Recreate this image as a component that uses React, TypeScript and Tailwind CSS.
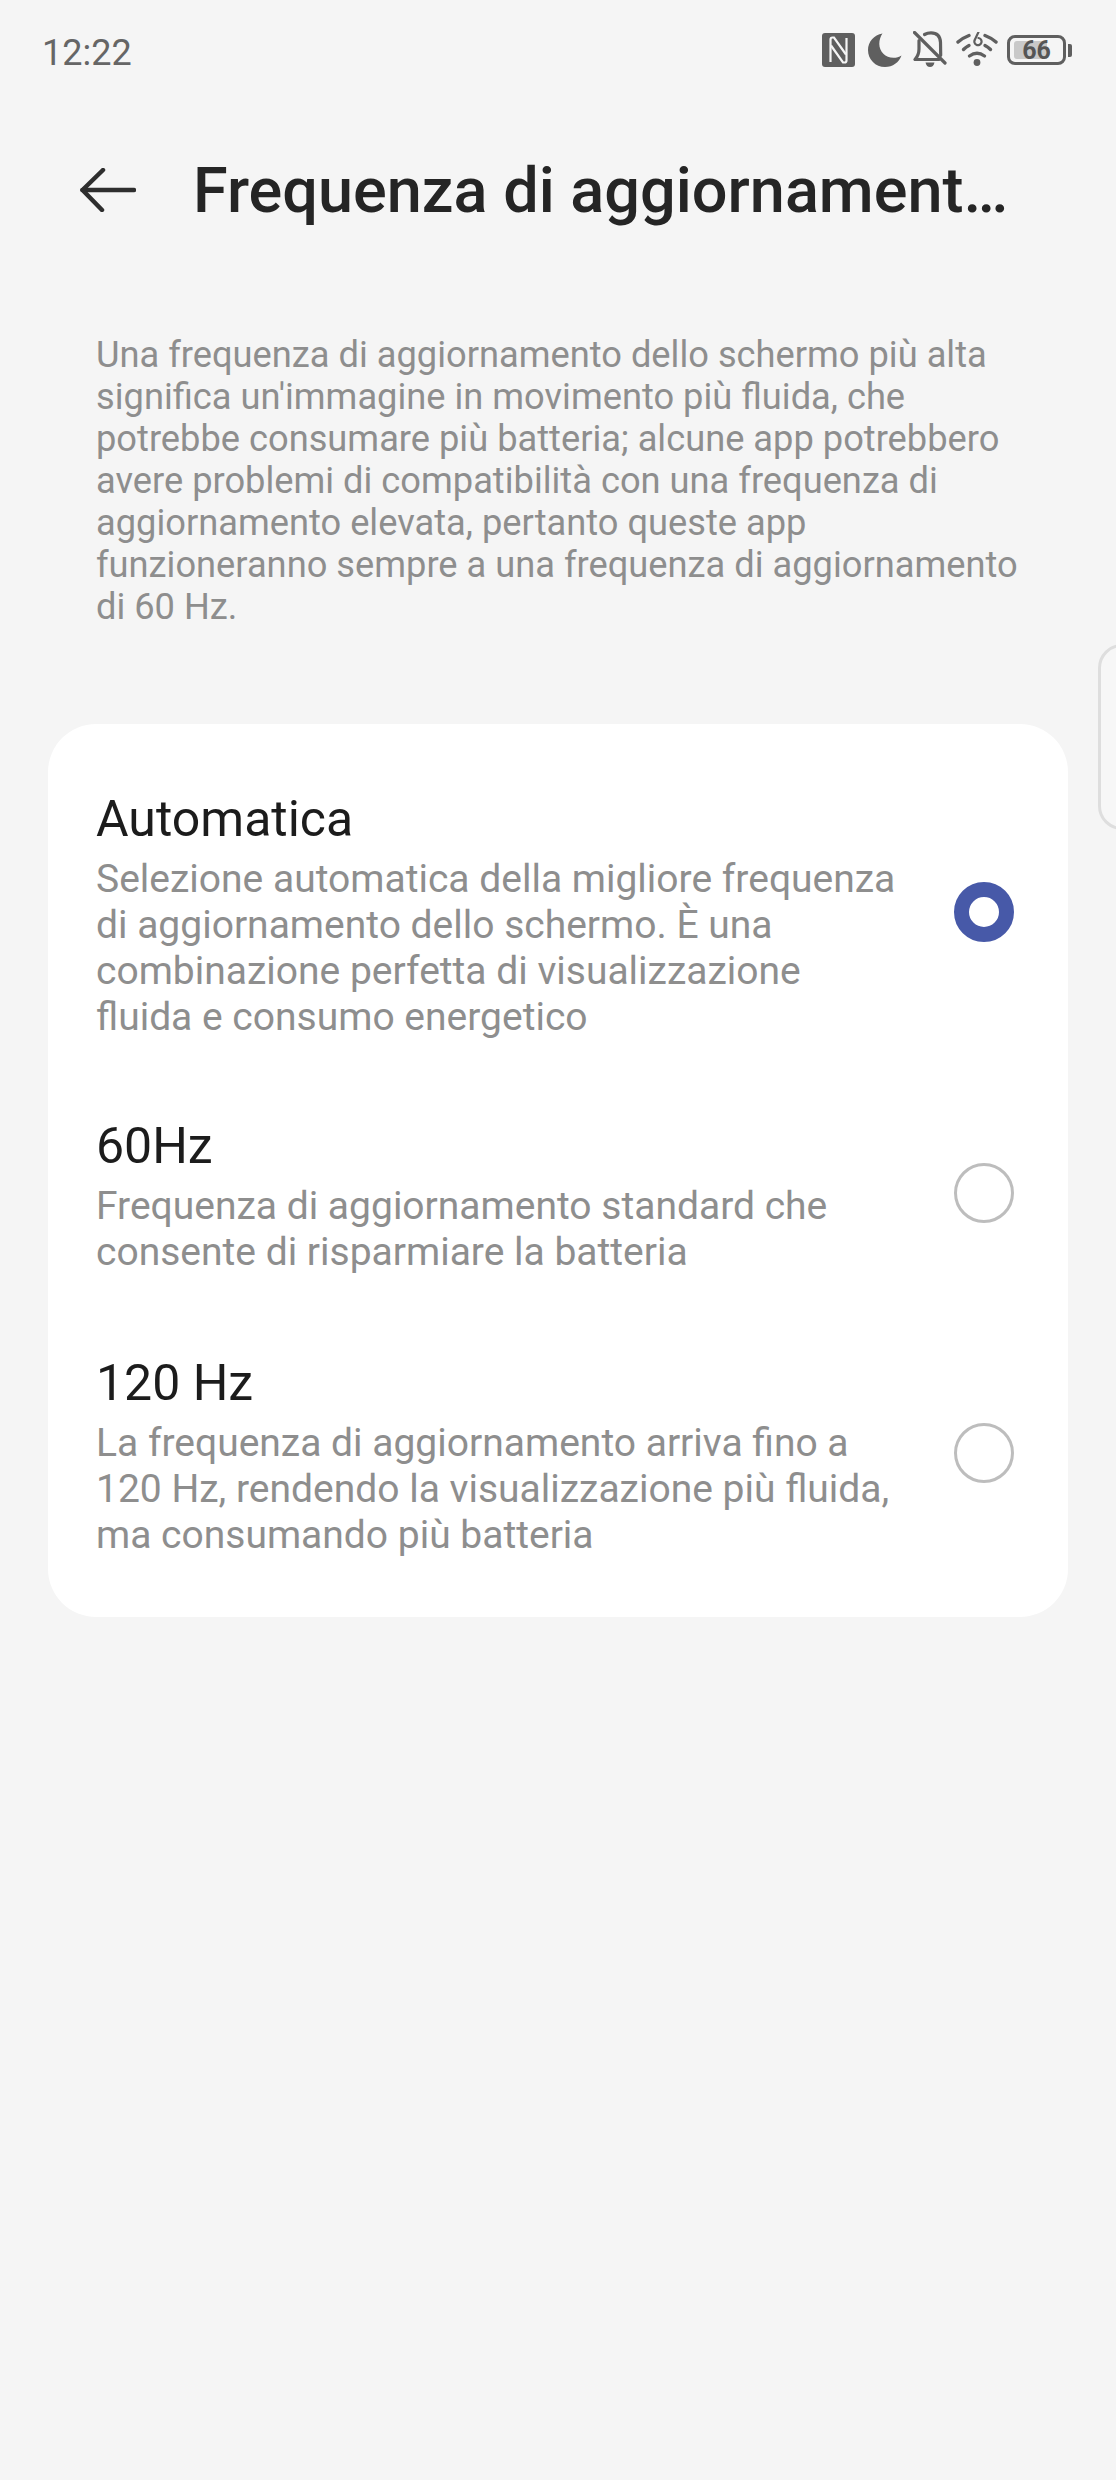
import React from "react";

function StatusIcons() {
  return (
    <div className="flex items-center text-[#5f5f5f]">
      <svg width="33" height="34" viewBox="0 0 33 34">
        <rect width="33" height="34" rx="3" fill="#5f5f5f" />
        <path fill="none" stroke="#f5f5f5" strokeWidth="2.200" d="M8.500 29V6.500q0-2 2-2h1.500l12 17" />
        <path fill="none" stroke="#f5f5f5" strokeWidth="2.200" d="M24.500 5v22.500q0 2-2 2H21L9 12.500" />
      </svg>
      <svg width="34" height="34" viewBox="0 0 34 34" className="ml-[13px]">
        <path fill="#5f5f5f" d="M14.500.500C6 2 0 8.800 0 17c0 9.500 7.500 17 17 17 7.800 0 14-4.600 16.500-11.500-2.300 1.500-5 2.300-8 2.300C17.500 24.800 11.300 18.500 11.300 11c0-4 1.100-7.500 3.200-10.500z" />
      </svg>
      <svg width="34" height="38" viewBox="0 0 34 38" className="ml-[11px]" fill="none" stroke="#5f5f5f" strokeWidth="3.200" strokeLinecap="round" strokeLinejoin="round">
        <path d="M11.500 3.500Q14.500 1.800 18 1.800q9 0 9.500 9.500l.200 13" />
        <path d="M6 9.500V18q0 6-4 10.500h24" />
        <path d="M1.500 1.500 32 32" />
        <path fill="#5f5f5f" stroke="none" d="M12.500 31.500h9q-1 4.500-4.500 4.500t-4.500-4.500z" />
      </svg>
      <svg width="42" height="36" viewBox="0 0 42 36" className="ml-[9px]" fill="none" stroke="#5f5f5f" strokeWidth="3.400" strokeLinecap="round">
        <path d="M2 10Q6.500 6 13 3.500" />
        <path d="M29 3.500Q35.500 6 40 10" />
        <path d="M7.500 17.500Q10 15 13 13.500" />
        <path d="M29 13.500Q32 15 34.500 17.500" />
        <path d="M13.500 24Q21 18.500 28.500 24" />
        <circle cx="21" cy="30.500" r="3.400" fill="#5f5f5f" stroke="none" />
        <path strokeWidth="2.200" d="M22.500 0 19 7.500a3.600 3.600 0 1 0 3.500-1.500" />
      </svg>
      <div className="relative ml-[9px] flex h-[30px] w-[59px] items-center justify-center rounded-[8px] border-[3px] border-[#5f5f5f]">
        <div className="absolute left-[4px] top-[3px] bottom-[3px] w-[33px] rounded-l-[3px] bg-[#c9c9c9]" />
        <span className="relative font-['Roboto',sans-serif] text-[25px] font-bold leading-none text-[#555555]">66</span>
      </div>
      <div className="ml-[2px] h-[13px] w-[4px] rounded-r-[2px] bg-[#5f5f5f]" />
    </div>
  );
}

function Radio({ on }: { on?: boolean }) {
  return on ? (
    <div className="mb-[8px] h-[60px] w-[60px] shrink-0 rounded-full border-[15px] border-[#4759a8] bg-white" />
  ) : (
    <div className="mb-[8px] h-[60px] w-[60px] shrink-0 rounded-full border-[3.500px] border-[#bdbdbd] bg-white" />
  );
}

function Option({ title, lines, on, className }: { title: string; lines: string[]; on?: boolean; className?: string }) {
  return (
    <div className={"flex items-center justify-between " + (className ?? "")}>
      <div>
        <div className="text-[50px] leading-[56px] text-[#1c1c1c]">{title}</div>
        <div className="mt-[9px] text-[39px] leading-[46px] text-[#8e8e8e]">
          {lines.map((l) => (
            <div key={l} className="whitespace-nowrap">{l}</div>
          ))}
        </div>
      </div>
      <Radio on={on} />
    </div>
  );
}

export default function App() {
  return (
    <div className="relative h-[2480px] w-[1116px] overflow-hidden bg-[#f5f5f5] font-['Roboto',sans-serif]">
      <div className="flex h-[100px] items-center justify-between pl-[42px] pr-[44px]">
        <span className="pt-[5px] text-[36px] text-[#666666]">12:22</span>
        <StatusIcons />
      </div>

      <div className="flex h-[180px] items-center pl-[80px]">
        <svg width="56" height="44" viewBox="0 0 56 44" fill="none" stroke="#2e2e2e" strokeWidth="4.500" strokeLinecap="round" strokeLinejoin="round">
          <path d="M54 22H2.500" />
          <path d="M23 2 2.500 22 22 42" />
        </svg>
        <h1 className="ml-[57px] whitespace-nowrap text-[63px] font-medium leading-none text-[#252525]">Frequenza di aggiornament…</h1>
      </div>

      <div className="pl-[96px] pt-[54px] text-[36.250px] leading-[42px] text-[#8e8e8e]">
        {[
          "Una frequenza di aggiornamento dello schermo più alta",
          "significa un'immagine in movimento più fluida, che",
          "potrebbe consumare più batteria; alcune app potrebbero",
          "avere problemi di compatibilità con una frequenza di",
          "aggiornamento elevata, pertanto queste app",
          "funzioneranno sempre a una frequenza di aggiornamento",
          "di 60 Hz.",
        ].map((l) => (
          <div key={l} className="whitespace-nowrap">{l}</div>
        ))}
      </div>

      <div className="ml-[48px] mt-[96px] h-[893px] w-[1020px] rounded-[48px] bg-white pl-[48px] pr-[54px] pt-[67px]">
        <Option
          title="Automatica"
          on
          lines={[
            "Selezione automatica della migliore frequenza",
            "di aggiornamento dello schermo. È una",
            "combinazione perfetta di visualizzazione",
            "fluida e consumo energetico",
          ]}
        />
        <Option
          className="mt-[78px]"
          title="60Hz"
          lines={["Frequenza di aggiornamento standard che", "consente di risparmiare la batteria"]}
        />
        <Option
          className="mt-[80px]"
          title="120 Hz"
          lines={[
            "La frequenza di aggiornamento arriva fino a",
            "120 Hz, rendendo la visualizzazione più fluida,",
            "ma consumando più batteria",
          ]}
        />
      </div>

      <div className="absolute right-[-20px] top-[644px] h-[186px] w-[38px] rounded-l-[24px] border-[3px] border-[#dedede] bg-[#f7f7f7]" />
    </div>
  );
}
